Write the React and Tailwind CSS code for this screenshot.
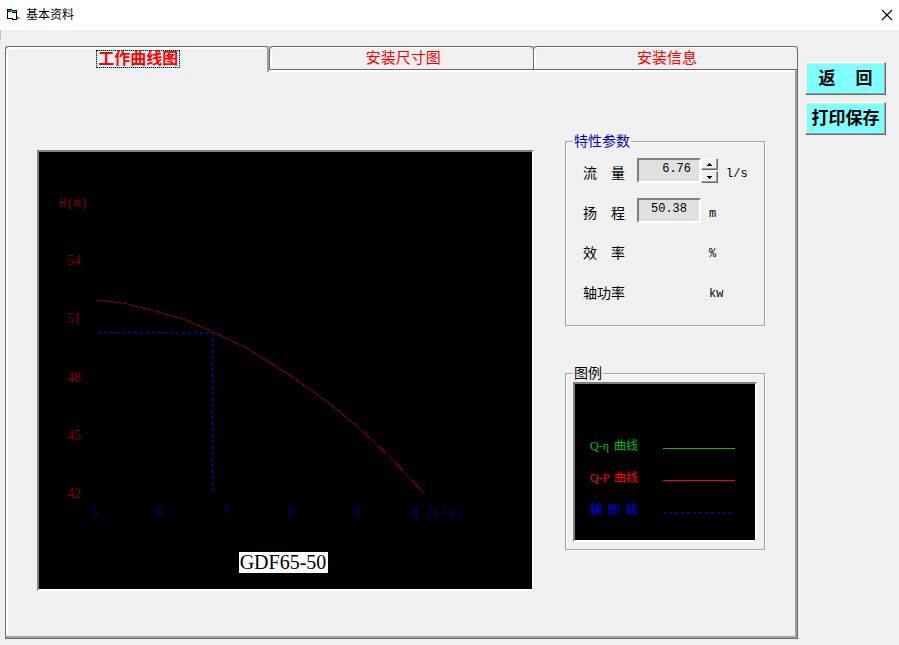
import { useState } from "react";

const curve =
  "58,148 84,151 116,159 147,168 174,180 206,195 252,224 291,252 319,275 351,305 386,342";

const yLabels = [
  { text: "54", y: 113 },
  { text: "51", y: 171 },
  { text: "48", y: 230 },
  { text: "45", y: 288 },
  { text: "42", y: 346 },
];

const xLabels = [
  { text: "5", x: 52 },
  { text: "6", x: 118 },
  { text: "7", x: 184 },
  { text: "8", x: 249 },
  { text: "9", x: 315 },
];

const tabs = ["工作曲线图", "安装尺寸图", "安装信息"];

function TitleBar() {
  return (
    <header className="flex h-[30px] items-center bg-white pl-[7px] pr-[6px]">
      <svg width="13" height="12" viewBox="0 0 13 12" shapeRendering="crispEdges">
        <path d="M0 0h5v1h5v10H5v-1H0z" fill="#000" />
        <path d="M1 3h4v1h4v6H6V9H1z" fill="#fff" />
        <path d="M1 1h4v1h4v1H4V2H1z" fill="#00c8d0" />
        <path d="M10 7h1v1h1v1h1v1h-3z" fill="#808080" />
      </svg>
      <h1 className="ml-[6px] flex-1 text-xs text-black">基本资料</h1>
      <button aria-label="关闭" className="flex h-6 w-3 items-center justify-center">
        <svg width="12" height="12" viewBox="0 0 12 12" stroke="#000" strokeWidth="1.1">
          <path d="M1 1l10 10M11 1L1 11" />
        </svg>
      </button>
    </header>
  );
}

function Tab({ text, active, onClick }) {
  if (active) {
    return (
      <button
        role="tab"
        aria-selected="true"
        onClick={onClick}
        className="relative z-10 -mb-[2px] flex h-[26px] w-1/3 items-start justify-center rounded-t-[4px] border-l border-r-2 border-t border-l-[#696969] border-r-[#a0a0a0] border-t-[#696969] bg-[#f0f0f0] pl-[3px] pt-[3px] text-base font-bold text-[#ff0000] shadow-[inset_2px_2px_0_#fff]"
      >
        <span className="border border-dotted border-black bg-[#00ffff]">
          <span className="block bg-[#f0f0f0] px-px leading-4">{text}</span>
        </span>
      </button>
    );
  }
  return (
    <button
      role="tab"
      aria-selected="false"
      onClick={onClick}
      className="-mr-px flex h-6 flex-1 items-center justify-center rounded-t-[4px] border border-[#696969] bg-[#f0f0f0] pl-[3px] text-[15px] text-[#ff0000] shadow-[inset_2px_1px_0_#fff] last:mr-0"
    >
      {text}
    </button>
  );
}

function Chart() {
  return (
    <div className="mt-[17px] min-w-0 flex-1 self-start border-2 border-b-white border-l-[#808080] border-r-white border-t-[#808080] bg-black">
      <svg viewBox="0 0 493 437" className="block w-full font-['Liberation_Serif',serif]">
        <g fill="#800000" fontSize="14">
          <text x="20" y="55" fontSize="12" className="font-['Liberation_Mono',monospace]">
            H(m)
          </text>
          {yLabels.map((l) => (
            <text key={l.text} x="28" y={l.y}>{l.text}</text>
          ))}
        </g>
        <g fill="#000080" fontSize="14">
          {xLabels.map((l) => (
            <text key={l.text} x={l.x} y="364">{l.text}</text>
          ))}
          <text x="373" y="364" fontSize="12" className="font-['Liberation_Mono',monospace]">
            Q (L/s)
          </text>
        </g>
        <polyline points={curve} fill="none" stroke="#800000" shapeRendering="crispEdges" />
        <path
          d="M59 180.5H174M173.5 180V340"
          fill="none"
          stroke="#0000ff"
          strokeWidth="1"
          strokeDasharray="3 3"
          shapeRendering="crispEdges"
        />
        <rect x="200" y="400" width="89" height="21" fill="#fff" />
        <text x="244" y="417" textAnchor="middle" fontSize="20" fill="#000">GDF65-50</text>
      </svg>
    </div>
  );
}

function Group({ title, titleClass, className, children }) {
  return (
    <fieldset className="border border-[#a0a0a0] px-[7px] pb-[7px] shadow-[1px_1px_0_#fff,inset_1px_1px_0_#fff]">
      <legend className={`bg-[#f0f0f0] px-px text-sm leading-4 ${titleClass}`}>{title}</legend>
      <div className={className}>{children}</div>
    </fieldset>
  );
}

function Param({ id, label, unit, children }) {
  return (
    <div className="flex h-10 items-start text-sm leading-[30px]">
      <label htmlFor={id} className="w-[54px] shrink-0">{label}</label>
      {children}
      <span className="ml-2 font-['Liberation_Mono',monospace] text-xs leading-8">{unit}</span>
    </div>
  );
}

const fieldClass =
  "h-[25px] w-16 border-2 border-b-white border-l-[#808080] border-r-white border-t-[#808080] bg-[#e0e0e0] pb-1 font-['Liberation_Mono',monospace] text-xs";

const spinClass =
  "flex h-3 w-[17px] items-center justify-center border border-b-[#696969] border-l-white border-r-[#696969] border-t-white bg-[#f0f0f0] shadow-[inset_-1px_-1px_0_#a0a0a0]";

function Params() {
  const [flow, setFlow] = useState("6.76");
  const step = (d) => setFlow((Number(flow) + d).toFixed(2));

  return (
    <Group title="特性参数" titleClass="text-[#0000c0]" className="pl-[10px] pt-[9px]">
      <Param id="flow" label="流　量" unit="l/s">
        <input
          id="flow"
          value={flow}
          onChange={(e) => setFlow(e.target.value)}
          className={`${fieldClass} pr-2 text-right`}
        />
        <div className="flex flex-col gap-px">
          <button aria-label="增加" onClick={() => step(0.01)} className={spinClass}>
            <svg width="5" height="3" viewBox="0 0 5 3" shapeRendering="crispEdges">
              <path d="M2 0h1v1h1v1h1v1H0V2h1V1h1z" />
            </svg>
          </button>
          <button aria-label="减少" onClick={() => step(-0.01)} className={spinClass}>
            <svg width="5" height="3" viewBox="0 0 5 3" shapeRendering="crispEdges">
              <path d="M0 0h5v1H4v1H3v1H2V2H1V1H0z" />
            </svg>
          </button>
        </div>
      </Param>
      <Param id="head" label="扬　程" unit="m">
        <input id="head" defaultValue="50.38" className={`${fieldClass} text-center`} />
      </Param>
      <Param id="eff" label="效　率" unit="%">
        <output id="eff" className="w-16" />
      </Param>
      <Param id="power" label="轴功率" unit="kw">
        <output id="power" className="w-16" />
      </Param>
    </Group>
  );
}

function LegendRow({ parts, textClass, dash }) {
  return (
    <div className={`flex h-8 items-center justify-between ${textClass}`}>
      <span className="flex w-12 items-baseline justify-between text-xs">
        {parts.map((p) => (
          <span key={p} className={p.startsWith("Q") ? "font-['Liberation_Serif',serif]" : ""}>
            {p}
          </span>
        ))}
      </span>
      <svg width="72" height="5" viewBox="0 0 72 5" shapeRendering="crispEdges">
        <path d="M0 4.5H72" stroke="currentColor" strokeDasharray={dash} />
      </svg>
    </div>
  );
}

function Legend() {
  return (
    <Group title="图例" titleClass="text-black" className="pt-px">
      <div className="h-[160px] border-2 border-b-white border-l-[#808080] border-r-white border-t-[#808080] bg-black pl-[15px] pr-5 pt-[46px]">
        <LegendRow parts={["Q-η", "曲线"]} textClass="text-[#00c000]" />
        <LegendRow parts={["Q-P", "曲线"]} textClass="text-[#ff0000]" />
        <LegendRow parts={["辅", "助", "线"]} textClass="text-[#0000ff]" dash="3 3" />
      </div>
    </Group>
  );
}

const actionClass =
  "flex h-[33px] items-center justify-center border border-b-[#696969] border-l-white border-r-[#696969] border-t-white bg-[#80ffff] text-[17px] font-bold text-black shadow-[inset_-1px_-1px_0_#a0a0a0,inset_1px_1px_0_#e3e3e3]";

export default function App() {
  const [active, setActive] = useState(0);

  return (
    <div className="flex min-h-screen flex-col bg-[#f0f0f0] font-['Liberation_Sans','Noto_Sans_CJK_SC',sans-serif] text-black">
      <TitleBar />
      <div className="h-[10px] w-px bg-[#c0c0c0]" />
      <main className="flex items-start gap-[7px] pb-[6px] pl-[5px] pr-[13px] pt-[6px]">
        <section className="min-w-0 flex-1">
          <div role="tablist" className="flex bg-[#c0c0c0]">
            {tabs.map((t, i) => (
              <Tab key={t} text={t} active={active === i} onClick={() => setActive(i)} />
            ))}
          </div>
          <div
            role="tabpanel"
            className="flex items-start gap-[31px] border-x border-b border-[#696969] pb-[47px] pl-[31px] pr-[32px] pt-[63px] shadow-[inset_-2px_-2px_0_#a0a0a0,inset_2px_2px_0_#fff]"
          >
            <Chart />
            <div className="flex w-[200px] shrink-0 flex-col gap-[39px]">
              <Params />
              <Legend />
            </div>
          </div>
        </section>
        <aside className="flex w-[81px] flex-col gap-[7px] pt-4">
          <button className={`${actionClass} gap-5`}>
            <span>返</span>
            <span>回</span>
          </button>
          <button className={actionClass}>打印保存</button>
        </aside>
      </main>
    </div>
  );
}
